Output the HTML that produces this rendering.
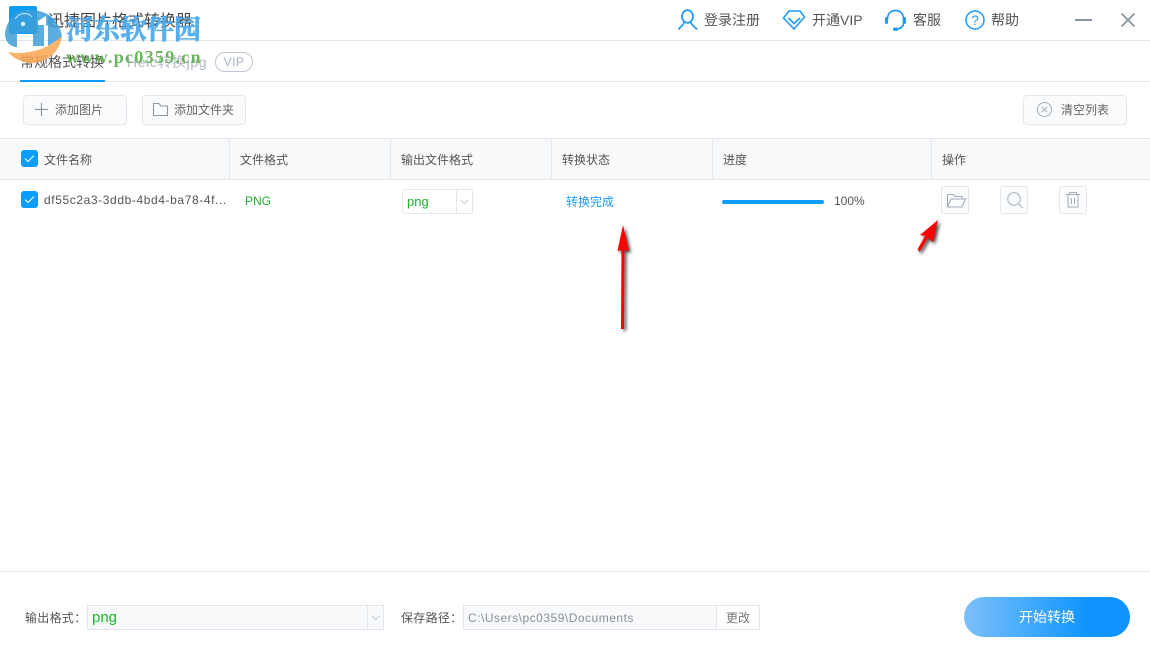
<!DOCTYPE html>
<html><head><meta charset="utf-8">
<style>
html,body{margin:0;padding:0;background:#fff}
#p{position:relative;width:1150px;height:650px;overflow:hidden;background:#fff;font-family:"Liberation Sans","Noto Sans CJK SC",sans-serif;color:#555}
.t{position:absolute;white-space:nowrap;line-height:16px}
.b{position:absolute;box-sizing:border-box}
svg{position:absolute;overflow:visible}
</style></head><body><div id="p">

<!-- logo -->
<div class="b" style="left:9px;top:6px;width:28px;height:28px;background:#0f9cf5;border-radius:2px"></div>
<div class="t" style="left:48px;top:12px;font-size:16px;line-height:20px;color:#444">迅捷图片格式转换器</div>

<!-- lines -->
<div class="b" style="left:0;top:40px;width:1150px;height:1px;background:#e3e5ea"></div>
<div class="b" style="left:0;top:81px;width:1150px;height:1px;background:#e6e8ec"></div>
<div class="b" style="left:20px;top:80px;width:85px;height:1.500px;background:#0f9cff"></div>

<!-- tabs -->
<div class="t" style="left:20px;top:54px;font-size:14px;color:#555">常规格式转换</div>
<div class="t" style="left:127px;top:54px;font-size:14px;letter-spacing:.6px;color:#b0b8c4">Heic转换jpg</div>
<div class="b" style="left:215px;top:52px;width:38px;height:20px;border:1px solid #bcc6d2;border-radius:10px;font-size:12px;letter-spacing:.5px;line-height:18px;text-align:center;color:#a9b4c2">VIP</div>

<!-- watermark -->
<svg style="left:0;top:0" width="80" height="70" viewBox="0 0 80 70">
<path d="M25 10C38 9 50 13 56 22L46 26V16L38 21V33H17V47H15C8 45 5 40 5 34C6 22 14 12 25 10Z" fill="#3d9fd8" opacity=".85"/>
<path d="M33 25H44V46H33Z" fill="#3d9fd8" opacity=".85"/>
<path d="M48 15C56 20 61 28 62 37L48 46Z" fill="#3d9fd8" opacity=".85"/>
<path d="M8 52C24 55 46 51 62 36C60 50 50 60 36 63C24 64 14 59 8 52Z" fill="#f9a650" opacity=".85"/>
<circle cx="23" cy="24" r="2.200" fill="#dff2ff"/>
<path d="M15 19C20 12 28 12 32 17" fill="none" stroke="#bfe4ff" stroke-width="1"/>
</svg>
<div class="t" style="left:66px;top:14px;font-family:'Liberation Serif','Noto Serif CJK SC',serif;font-weight:700;font-size:27px;line-height:32px;color:#4aa9ee;-webkit-text-stroke:.7px #4aa9ee;opacity:.92">河东软件园</div>
<div class="t" style="left:66px;top:47px;font-family:'Liberation Serif',serif;font-weight:700;font-size:18px;line-height:20px;letter-spacing:1.300px;color:#5fae4e;opacity:.9">www.pc0359.cn</div>

<!-- top right -->
<svg style="left:677px;top:9px" width="22" height="22" viewBox="0 0 22 22" fill="none" stroke="#1e9bf5" stroke-width="1.800">
<ellipse cx="10.500" cy="7.500" rx="5.500" ry="6.300"/><path d="M7 13.500C6.500 16 4 17 1.500 20.500M14 13.500C14.500 16 17 17 20 20.500"/></svg>
<div class="t" style="left:704px;top:12px;font-size:14px;color:#555">登录注册</div>
<svg style="left:783px;top:10px" width="22" height="20" viewBox="0 0 22 20" fill="none" stroke="#1e9bf5" stroke-width="1.600">
<path d="M6 1H17L21.500 7L11 19L.5 8Z"/><path d="M5.500 8L11 13.500L17 8"/></svg>
<div class="t" style="left:812px;top:12px;font-size:14px;color:#555">开通VIP</div>
<svg style="left:885px;top:9px" width="22" height="24" viewBox="0 0 22 24" fill="none" stroke="#1e9bf5" stroke-width="1.700">
<path d="M2.500 10C2.500 4.500 6 1.500 10.500 1.500S18.500 4.500 18.500 10V15C18 18 15 20 11 20"/><rect x="0" y="8" width="3" height="7" rx="1.500" fill="#1e9bf5" stroke="none"/><rect x="18" y="8" width="3" height="7" rx="1.500" fill="#1e9bf5" stroke="none"/><rect x="8" y="18.500" width="5" height="3.500" rx="1.700" fill="#1e9bf5" stroke="none"/></svg>
<div class="t" style="left:913px;top:12px;font-size:14px;color:#555">客服</div>
<svg style="left:965px;top:10px" width="20" height="20" viewBox="0 0 20 20" fill="none">
<circle cx="10" cy="10" r="9" stroke="#1e9bf5" stroke-width="1.500"/><text x="10" y="15" text-anchor="middle" font-size="14" fill="#1e9bf5" font-family="Liberation Sans">?</text></svg>
<div class="t" style="left:991px;top:12px;font-size:14px;color:#555">帮助</div>
<div class="b" style="left:1075px;top:19px;width:17px;height:2px;background:#8794a3"></div>
<svg style="left:1121px;top:13px" width="14" height="14" viewBox="0 0 14 14" stroke="#8794a3" stroke-width="1.800"><path d="M.5 .5L13.500 13.500M13.500 .5L.5 13.500"/></svg>

<!-- toolbar -->
<div class="b" style="left:23px;top:95px;width:104px;height:30px;background:#fafbfc;border:1px solid #e4e7ec;border-radius:4px"></div>
<svg style="left:35px;top:103px" width="13" height="13" stroke="#8d99a6" stroke-width="1.200"><path d="M6.500 0V13M0 6.500H13"/></svg>
<div class="t" style="left:55px;top:102px;font-size:12px;color:#666">添加图片</div>
<div class="b" style="left:142px;top:95px;width:104px;height:30px;background:#fafbfc;border:1px solid #e4e7ec;border-radius:4px"></div>
<svg style="left:153px;top:103px" width="15" height="13" fill="none" stroke="#8d99a6" stroke-width="1.100"><path d="M.5 12.500V.5H6L8 3H14.500V12.500Z"/></svg>
<div class="t" style="left:174px;top:102px;font-size:12px;color:#666">添加文件夹</div>
<div class="b" style="left:1023px;top:95px;width:104px;height:30px;background:#fafbfc;border:1px solid #e4e7ec;border-radius:4px"></div>
<svg style="left:1037px;top:102px" width="15" height="15" fill="none" stroke="#a0acb8" stroke-width="1"><circle cx="7.500" cy="7.500" r="7"/><path d="M4.800 4.800L10.200 10.200M10.200 4.800L4.800 10.200"/></svg>
<div class="t" style="left:1061px;top:102px;font-size:12px;color:#666">清空列表</div>

<!-- table header -->
<div class="b" style="left:0;top:138px;width:1150px;height:42px;background:#f8f9fb;border-top:1px solid #e4e7ec;border-bottom:1px solid #e4e7ec"></div>
<div class="b" style="left:229px;top:139px;width:1px;height:40px;background:#e4e7ec"></div>
<div class="b" style="left:390px;top:139px;width:1px;height:40px;background:#e4e7ec"></div>
<div class="b" style="left:551px;top:139px;width:1px;height:40px;background:#e4e7ec"></div>
<div class="b" style="left:712px;top:139px;width:1px;height:40px;background:#e4e7ec"></div>
<div class="b" style="left:931px;top:139px;width:1px;height:40px;background:#e4e7ec"></div>

<div class="b" style="left:21px;top:150px;width:17px;height:17px;background:#0f9cff;border-radius:3px"></div>
<svg style="left:24px;top:154px" width="11" height="9" fill="none" stroke="#fff" stroke-width="1"><path d="M1 4.500L4 7.500L10 1.500"/></svg>
<div class="t" style="left:44px;top:152px;font-size:12px;color:#555">文件名称</div>
<div class="t" style="left:240px;top:152px;font-size:12px;color:#555">文件格式</div>
<div class="t" style="left:401px;top:152px;font-size:12px;color:#555">输出文件格式</div>
<div class="t" style="left:562px;top:152px;font-size:12px;color:#555">转换状态</div>
<div class="t" style="left:723px;top:152px;font-size:12px;color:#555">进度</div>
<div class="t" style="left:942px;top:152px;font-size:12px;color:#555">操作</div>

<!-- row -->
<div class="b" style="left:21px;top:191px;width:17px;height:17px;background:#0f9cff;border-radius:3px"></div>
<svg style="left:24px;top:195px" width="11" height="9" fill="none" stroke="#fff" stroke-width="1"><path d="M1 4.500L4 7.500L10 1.500"/></svg>
<div class="t" style="left:44px;top:192px;font-size:12px;letter-spacing:.6px;color:#555">df55c2a3-3ddb-4bd4-ba78-4f...</div>
<div class="t" style="left:245px;top:193px;font-size:12px;color:#1fb02a">PNG</div>
<div class="b" style="left:402px;top:189px;width:71px;height:25px;background:#fff;border:1px solid #e4e7ec;border-radius:3px"></div>
<div class="b" style="left:456px;top:190px;width:1px;height:23px;background:#e4e7ec"></div>
<svg style="left:460px;top:199px" width="9" height="6" fill="none" stroke="#c5cbd6"><path d="M1 1L4.500 4.500L8 1"/></svg>
<div class="t" style="left:407px;top:194px;font-size:13px;color:#1fb02a">png</div>
<div class="t" style="left:566px;top:194px;font-size:12px;color:#1a9cf5">转换完成</div>
<div class="b" style="left:722px;top:200px;width:102px;height:4px;background:#0f9cff;border-radius:2px"></div>
<div class="t" style="left:834px;top:193px;font-size:12px;color:#555">100%</div>

<div class="b" style="left:941px;top:186px;width:28px;height:28px;background:#fbfcfe;border:1px solid #e4e7ec;border-radius:3px"></div>
<svg style="left:947px;top:194px" width="19" height="14" fill="none" stroke="#a0acb8" stroke-width="1"><path d="M.5 13V.5H6L8 2.500H15V5M.5 13H15L18.500 5H4L.5 13Z"/></svg>
<div class="b" style="left:1000px;top:186px;width:28px;height:28px;background:#fbfcfe;border:1px solid #e4e7ec;border-radius:3px"></div>
<svg style="left:1007px;top:192px" width="16" height="16" fill="none" stroke="#b0bbc6" stroke-width="1.200"><circle cx="7" cy="7" r="6.300"/><path d="M11.500 11.500L16 16"/></svg>
<div class="b" style="left:1059px;top:186px;width:28px;height:28px;background:#fbfcfe;border:1px solid #e4e7ec;border-radius:3px"></div>
<svg style="left:1066px;top:192px" width="14" height="16" fill="none" stroke="#a0acb8" stroke-width="1"><path d="M0 2.500H14M3.500 2.500V.5H10.500V2.500M2 2.500V15H12V2.500M5.500 6V12M8.500 6V12"/></svg>

<!-- arrows -->
<svg style="left:0;top:0" width="1150" height="650">
<defs><filter id="s" x="-80%" y="-30%" width="260%" height="160%"><feGaussianBlur stdDeviation="1.600"/></filter></defs>
<g transform="translate(2,2)" fill="#444" filter="url(#s)"><path d="M617.500 251L623 225L629 251L624.500 250L624 329H621.500L621.500 250Z"/><path d="M938 220L933 242L928 238L919.500 252L917.500 249.500L925 236L920 235Z"/></g>
<path d="M617.500 251L623 225L629 251L624.500 250L624 329H621L621.500 250Z" fill="#f00"/>
<path d="M938 220L933 242L928 238L919.500 252L917.500 249.500L925 236L920 235Z" fill="#f00"/>
</svg>

<!-- footer -->
<div class="b" style="left:0;top:571px;width:1150px;height:1px;background:#e6e7ea"></div>
<div class="t" style="left:25px;top:610px;font-size:12px;letter-spacing:.3px;color:#555">输出格式：</div>
<div class="b" style="left:87px;top:605px;width:297px;height:25px;background:#f8f9fb;border:1px solid #e3e5ec"></div>
<div class="b" style="left:367px;top:606px;width:1px;height:23px;background:#e3e5ec"></div>
<svg style="left:371px;top:615px" width="9" height="6" fill="none" stroke="#c5cbd6"><path d="M1 1L4.500 4.500L8 1"/></svg>
<div class="t" style="left:92px;top:610px;font-size:15px;color:#1fb02a">png</div>
<div class="t" style="left:401px;top:610px;font-size:12px;letter-spacing:.3px;color:#555">保存路径：</div>
<div class="b" style="left:463px;top:605px;width:297px;height:25px;background:#f8f9fb;border:1px solid #e3e5ec"></div>
<div class="b" style="left:716px;top:606px;width:44px;height:23px;background:#fff;border-left:1px solid #e3e5ec;border-right:1px solid #e3e5ec"></div>
<div class="t" style="left:468px;top:610px;font-size:12px;letter-spacing:.5px;color:#8a8f96">C:\Users\pc0359\Documents</div>
<div class="t" style="left:726px;top:610px;font-size:12px;color:#777">更改</div>
<div class="b" style="left:964px;top:597px;width:166px;height:40px;border-radius:20px;background:linear-gradient(90deg,#7cc0fb,#0f94ff 75%);color:#fff;font-size:14px;line-height:40px;text-align:center">开始转换</div>

</div></body></html>
